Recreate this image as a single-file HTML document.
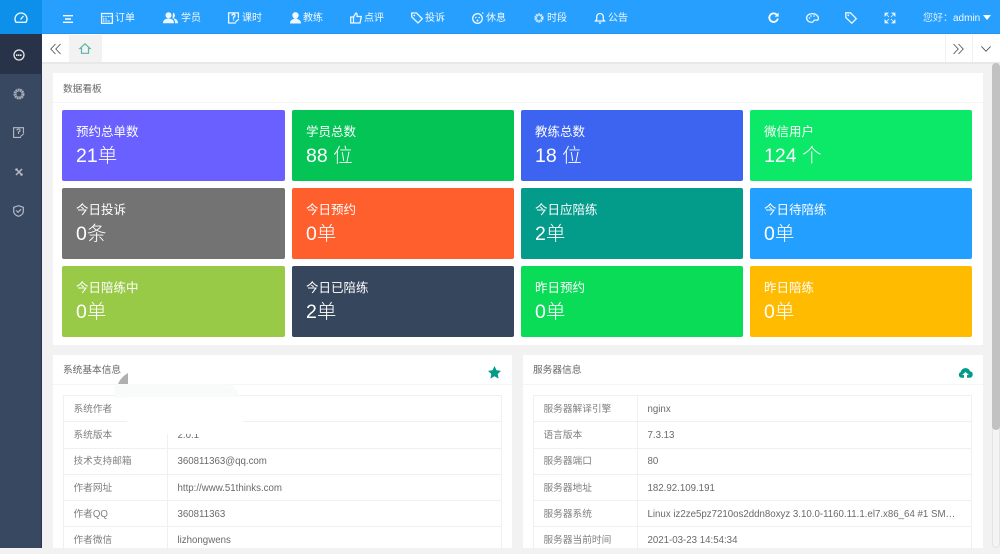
<!DOCTYPE html>
<html lang="zh"><head><meta charset="utf-8">
<style>
*{box-sizing:border-box}
html,body{margin:0;padding:0;width:1000px;height:548px;overflow:hidden;background:#f2f2f2;font-family:"Liberation Sans","Noto Sans CJK SC",sans-serif}
.abs{position:absolute}
#top{left:0;top:0;width:1000px;height:34px;background:#279fff;border-bottom:1px solid #1e96f5}
#logo{left:0;top:0;width:42px;height:34px;background:#0d90ea}
.n{position:absolute;top:12px;font-size:10px;line-height:13px;color:#f2f9ff;white-space:nowrap}
svg{position:absolute;overflow:visible}
.w{fill:none;stroke:#eef8ff;stroke-width:1.3}
.f{fill:#eef8ff}
#side{left:0;top:34px;width:42px;height:514px;background:#394861;border-right:1px solid #2a3650}
#act{left:0;top:34px;width:41px;height:40px;background:#28334a}
#tabs{left:42px;top:34px;width:958px;height:30px;background:#fff;border-bottom:2px solid #e8e8e8}
.card{position:absolute;background:#fff}
.hd{position:absolute;left:10px;top:9px;font-size:9.7px;line-height:14px;color:#666}
.line{position:absolute;left:0;right:0;height:1px;background:#f5f5f5}
.t{position:absolute;width:223px;height:71px;border-radius:2px;color:#fff;padding-left:14px}
.t b{display:block;font-weight:400;font-size:12.5px;line-height:16px;margin-top:14px;padding-top:0}
.t i{display:block;font-style:normal;font-weight:300;font-size:19.5px;line-height:24px;margin-top:4px}
table{position:absolute;border-collapse:collapse;table-layout:fixed;width:439px;font-size:9.7px;color:#6a6a6a}
td{height:26.3px;padding:2px 10px 0 9.5px;border:1px solid #f0f0f0;white-space:nowrap;overflow:hidden;text-overflow:ellipsis;line-height:14px}
td:first-child{width:104px;color:#808080}
#sb{left:992px;top:64px;width:8px;height:484px;background:#f4f4f4;border:1px solid #e4e4e4;border-radius:4px}
#th{left:992px;top:63px;width:8px;height:367px;background:#c2c2c2;border-radius:4px}
</style></head><body>

<div class="abs" id="top"></div>
<div class="abs" id="logo"></div>
<svg style="left:14px;top:12px" width="14" height="11" viewBox="0 0 14 11"><path class="w" d="M2 10.300A6 6 0 1 1 12 10.300Z"/><path class="w" d="M6.500 7.500L9.500 4"/></svg>

<svg style="left:63px;top:15px" width="10" height="9" viewBox="0 0 10 9"><path d="M0 .7H10M2 4H8M0 7.300H10" stroke="#fff" stroke-width="1.400"/></svg>

<svg style="left:101px;top:12px" width="12" height="12" viewBox="0 0 12 12"><rect class="w" x=".6" y="1.500" width="10.800" height="9.800"/><path class="w" d="M.6 4.500H11.400M2 7H6M2 9H9" stroke-dasharray="1 .6"/></svg>
<div class="n" style="left:115px">订单</div>
<svg style="left:163px;top:12px" width="15" height="12" viewBox="0 0 15 12"><circle class="f" cx="5.500" cy="3.300" r="3"/><path class="f" d="M0 11.300C0 7.500 3 6.500 5.500 6.500S11 7.500 11 11.300ZM10 .6a3 3 0 0 1 0 5.600C13 6.500 15 8 15 11.300H12C12 8.500 11 7 9.500 6.300Z"/></svg>
<div class="n" style="left:181px">学员</div>
<svg style="left:228px;top:12px" width="12" height="12" viewBox="0 0 12 12"><path class="w" d="M8 11H.6V.9H10.400V6"/><path class="w" d="M4 3.700Q4 2.200 5.500 2.200T7 3.700Q7 4.700 5.500 5.200V6.700M5.500 7.500V8.500M7.500 10L11 7"/></svg>
<div class="n" style="left:242px">课时</div>
<svg style="left:290px;top:12px" width="11" height="12" viewBox="0 0 11 12"><circle class="f" cx="5.500" cy="3.300" r="3.200"/><path class="f" d="M0 11.500C0 8 2.500 7.500 4.500 6.500H6.500C8.500 7.500 11 8 11 11.500Z"/></svg>
<div class="n" style="left:303px">教练</div>
<svg style="left:350px;top:12px" width="12" height="12" viewBox="0 0 12 12"><path class="w" d="M3.500 5H.7V11H3.500ZM3.500 5L6 1Q7.500 1.200 7 4.500H11.300L10 11H3.500"/></svg>
<div class="n" style="left:364px">点评</div>
<svg style="left:411px;top:12px" width="12" height="12" viewBox="0 0 12 12"><path class="w" d="M.7 1H5.500L11.300 6.800L7 11L.7 4.800Z"/><circle class="f" cx="3.300" cy="3.500" r=".9"/></svg>
<div class="n" style="left:425px">投诉</div>
<svg style="left:472px;top:12px" width="12" height="12" viewBox="0 0 12 12"><circle class="w" cx="5.500" cy="6.500" r="4.800"/><circle class="f" cx="3.800" cy="5.500" r=".8"/><circle class="f" cx="7.200" cy="5.500" r=".8"/><circle class="f" cx="5.500" cy="8.500" r="1"/><circle class="f" cx="10.800" cy="1" r=".8"/></svg>
<div class="n" style="left:486px">休息</div>
<svg style="left:534px;top:13px" width="10" height="10" viewBox="0 0 10 10"><circle cx="5" cy="5" r="3.300" fill="none" stroke="#d5ebff" stroke-width="2.600" stroke-dasharray="1.600 .5"/></svg>
<div class="n" style="left:547px">时段</div>
<svg style="left:595px;top:12px" width="10" height="12" viewBox="0 0 10 12"><path class="w" d="M.5 9H9.500L8.300 7.500V4.800A3.300 3.300 0 0 0 1.700 4.800V7.500ZM3.800 11H6.200"/></svg>
<div class="n" style="left:608px">公告</div>

<svg style="left:768px;top:12px" width="11" height="11" viewBox="0 0 11 11"><path d="M9.300 3.500A4.300 4.300 0 1 0 9.800 6.500" fill="none" stroke="#fff" stroke-width="1.800"/><path d="M10.600 .6V4.600H6.600Z" fill="#fff"/></svg>
<svg style="left:806px;top:13px" width="13" height="10" viewBox="0 0 13 10"><path class="w" d="M6.500.6C10 .6 12.400 3 12.400 5.500S10.500 7 9 7 7.500 9.400 6 9.400C3 9.400.6 7.500.6 5S3 .6 6.500.6Z"/><circle class="f" cx="3.500" cy="5" r=".8"/><circle class="f" cx="5" cy="3" r=".8"/><circle class="f" cx="8" cy="3" r=".8"/></svg>
<svg style="left:845px;top:12px" width="12" height="12" viewBox="0 0 12 12"><path class="w" d="M.8.800H5.500L11.300 6.700L6.800 11.200L.8 5.500Z"/><circle class="f" cx="3.300" cy="3.300" r=".9"/></svg>
<svg style="left:885px;top:13px" width="10" height="10" viewBox="0 0 10 10"><path d="M0 0H3L0 3ZM10 0V3L7 0ZM0 10V7L3 10ZM10 10H7L10 7ZM2 2L4 4M8 2L6 4M2 8L4 6M8 8L6 6" fill="#e6f4ff" stroke="#e6f4ff" stroke-width=".8"/></svg>
<div class="n" style="left:923px;color:#d5ebff">您好：</div>
<div class="n" style="left:953px">admin</div>
<svg style="left:983px;top:15px" width="8" height="5" viewBox="0 0 8 5"><path d="M0 0H8L4 5Z" fill="#fff"/></svg>

<div class="abs" id="side"></div>
<div class="abs" id="act"></div>
<svg style="left:13px;top:49px" width="12" height="12" viewBox="0 0 12 12"><circle cx="6" cy="6" r="5" fill="none" stroke="#e8e8e8" stroke-width="1.300"/><path d="M3 6.200H9" stroke="#e8e8e8" stroke-width="1.600" stroke-dasharray="1.500 .5"/></svg>
<svg style="left:12.500px;top:87.500px" width="12" height="12" viewBox="0 0 12 12"><circle cx="6" cy="6" r="4" fill="none" stroke="#a8aeba" stroke-width="3" stroke-dasharray="1.700 .5"/></svg>
<svg style="left:13px;top:127px" width="12" height="11" viewBox="0 0 12 11"><path fill="none" stroke="#b4bac6" stroke-width="1.100" d="M8 10.400H.6V.7H10.400V6"/><path fill="none" stroke="#b4bac6" stroke-width="1.100" d="M4 3.500Q4 2 5.500 2T7 3.500Q7 4.500 5.500 5V7M7.500 9.500L11 6.500"/></svg>
<svg style="left:15px;top:168px" width="8" height="8" viewBox="0 0 8 8"><path d="M1 1L7 7M7 1L1 7" stroke="#b4bac6" stroke-width="1.500"/><circle cx="1.500" cy="1.500" r="1.300" fill="#b4bac6"/><circle cx="6.500" cy="6.500" r="1.300" fill="#b4bac6"/></svg>
<svg style="left:13px;top:205px" width="11" height="12" viewBox="0 0 11 12"><path fill="none" stroke="#b4bac6" stroke-width="1.200" d="M5.500.7L10.300 2.300V6.500C10.300 9 8 10.500 5.500 11.300C3 10.500.7 9 .7 6.500V2.300Z"/><path fill="none" stroke="#b4bac6" stroke-width="1.200" d="M3.200 5.500L5 7.300L8 4.300"/></svg>

<div class="abs" id="tabs"></div>
<svg style="left:50px;top:44px" width="11" height="10" viewBox="0 0 11 10"><path d="M5.500 0L.8 5L5.500 10M10.500 0L5.800 5L10.500 10" fill="none" stroke="#555" stroke-width=".9"/></svg>
<div class="abs" style="left:69px;top:35px;width:33px;height:27px;background:#f2f2f2"></div>
<svg style="left:79px;top:43px" width="12" height="11" viewBox="0 0 12 11"><path d="M2.500 10.300V5.500H.9L6 .8L11.100 5.500H9.500V10.300Z" fill="none" stroke="#5fb3a8" stroke-width="1.200"/></svg>
<div class="abs" style="left:945px;top:35px;width:1px;height:27px;background:#f0f0f0"></div>
<div class="abs" style="left:972px;top:35px;width:1px;height:27px;background:#f0f0f0"></div>
<svg style="left:953px;top:44px" width="11" height="10" viewBox="0 0 11 10"><path d="M.5 0L5.200 5L.5 10M5.500 0L10.200 5L5.500 10" fill="none" stroke="#555" stroke-width=".9"/></svg>
<svg style="left:981px;top:46px" width="10" height="6" viewBox="0 0 10 6"><path d="M.4.400L5 5.200L9.600.400" fill="none" stroke="#555" stroke-width=".9"/></svg>

<div class="card" style="left:53px;top:73px;width:930px;height:272px">
  <div class="hd" style="top:8px;margin-top:0;line-height:16px;padding-top:1px">数据看板</div>
  <div class="line" style="top:29px"></div>
</div>
<div class="t" style="left:62px;top:110px;background:#6a60ff"><b>预约总单数</b><i>21单</i></div>
<div class="t" style="left:292px;top:110px;width:222px;background:#03c454"><b>学员总数</b><i>88 位</i></div>
<div class="t" style="left:521px;top:110px;width:222px;background:#3c64f0"><b>教练总数</b><i>18 位</i></div>
<div class="t" style="left:750px;top:110px;width:222px;background:#0ce968"><b>微信用户</b><i>124 个</i></div>
<div class="t" style="left:62px;top:188px;background:#737373"><b>今日投诉</b><i>0条</i></div>
<div class="t" style="left:292px;top:188px;width:222px;background:#ff5f2c"><b>今日预约</b><i>0单</i></div>
<div class="t" style="left:521px;top:188px;width:222px;background:#039b8a"><b>今日应陪练</b><i>2单</i></div>
<div class="t" style="left:750px;top:188px;width:222px;background:#239fff"><b>今日待陪练</b><i>0单</i></div>
<div class="t" style="left:62px;top:266px;background:#98ca47"><b>今日陪练中</b><i>0单</i></div>
<div class="t" style="left:292px;top:266px;width:222px;background:#36465d"><b>今日已陪练</b><i>2单</i></div>
<div class="t" style="left:521px;top:266px;width:222px;background:#0adc58"><b>昨日预约</b><i>0单</i></div>
<div class="t" style="left:750px;top:266px;width:222px;background:#ffbb00"><b>昨日陪练</b><i>0单</i></div>

<div class="card" style="left:53px;top:355px;width:459px;height:193px">
  <div class="hd">系统基本信息</div>
  <div class="line" style="top:29px"></div>
</div>
<svg style="left:488px;top:366px" width="13" height="13" viewBox="0 0 13 13"><path d="M6.500 0L8.500 4.300L13 4.900L9.700 8L10.600 12.600L6.500 10.300L2.400 12.600L3.300 8L0 4.900L4.500 4.300Z" fill="#049a88"/></svg>
<table style="left:63px;top:395px">
<tr><td>系统作者</td><td></td></tr>
<tr><td>系统版本</td><td>2.0.1</td></tr>
<tr><td>技术支持邮箱</td><td>360811363@qq.com</td></tr>
<tr><td>作者网址</td><td>http://www.51thinks.com</td></tr>
<tr><td>作者QQ</td><td>360811363</td></tr>
<tr><td>作者微信</td><td>lizhongwens</td></tr>
</table>
<svg style="left:118px;top:373px" width="10" height="11" viewBox="0 0 10 11"><path d="M0 11Q3 4 10 0V11Z" fill="#b0b0b0"/></svg>
<div class="abs" style="left:114px;top:384px;width:125px;height:14px;background:#f9fafa;border-radius:6px 14px 0 0"></div>
<div class="abs" style="left:127px;top:397px;width:116px;height:25px;background:#fff"></div>
<div class="abs" style="left:167px;top:422px;width:71px;height:12px;background:#fff"></div>

<div class="card" style="left:523px;top:355px;width:460px;height:193px">
  <div class="hd">服务器信息</div>
  <div class="line" style="top:29px"></div>
</div>
<svg style="left:958px;top:367px" width="15" height="11" viewBox="0 0 15 11"><path d="M3.500 10.800A3 3 0 0 1 2.800 5A4.800 4.800 0 0 1 12 4.300A3.300 3.300 0 0 1 12 10.800H9V8H11L7.500 5L4 8H6V10.800Z" fill="#049a88"/></svg>
<table style="left:533px;top:395px">
<tr><td>服务器解译引擎</td><td>nginx</td></tr>
<tr><td>语言版本</td><td>7.3.13</td></tr>
<tr><td>服务器端口</td><td>80</td></tr>
<tr><td>服务器地址</td><td>182.92.109.191</td></tr>
<tr><td>服务器系统</td><td>Linux iz2ze5pz7210os2ddn8oxyz 3.10.0-1160.11.1.el7.x86_64 #1 SMP Tue</td></tr>
<tr><td>服务器当前时间</td><td>2021-03-23 14:54:34</td></tr>
</table>

<div class="abs" id="sb"></div>
<div class="abs" id="th"></div>
</body></html>
